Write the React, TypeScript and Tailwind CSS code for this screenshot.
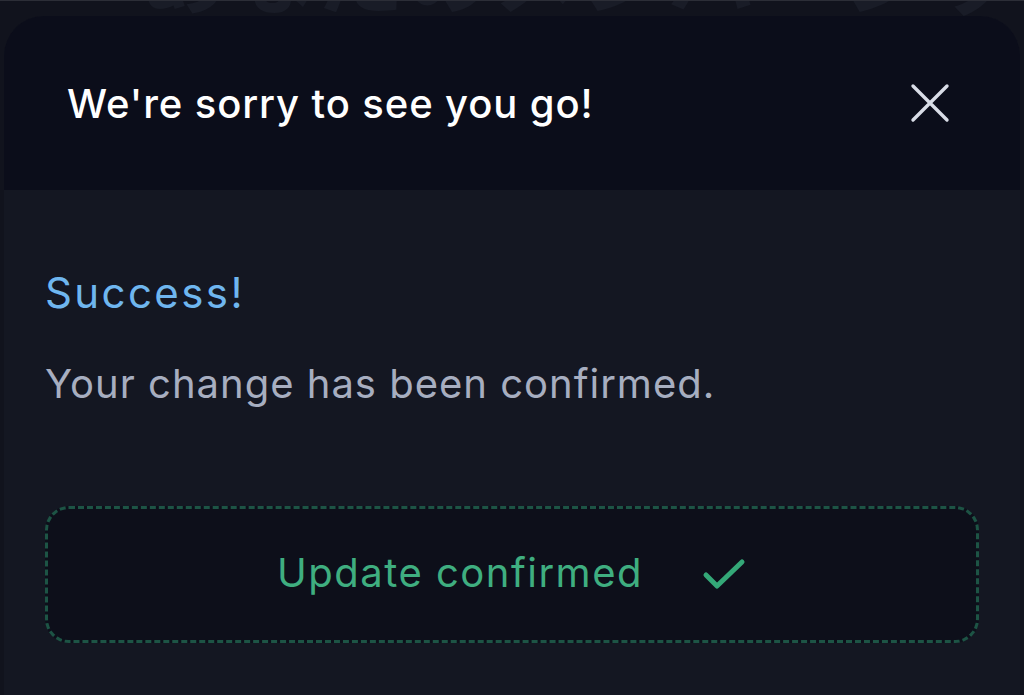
import React from 'react';

const App = () => {
  return (
    <div
      className="relative w-[1024px] h-[695px] overflow-hidden bg-[#11131d] border-t border-[#2c2e37]"
      style={{ fontFamily: 'Inter, "Noto Sans CJK JP", sans-serif' }}
    >
      {/* Page behind the sheet */}
      <div className="h-[15px] overflow-hidden">
        <div className="pl-[140px] -mt-[70px] text-[88px] font-bold leading-none text-[#191c27] whitespace-nowrap">
          あなたのメンバーシップ
        </div>
      </div>

      {/* Sheet */}
      <div className="mx-[4px] h-[690px] rounded-t-[40px] overflow-hidden bg-[#141722] flex flex-col">
        <div className="h-[174px] bg-[#0b0d1a] flex items-center justify-between pl-[63px] pr-[70px]">
          <h2 className="text-[40px] font-medium text-white tracking-[0.9px] pt-[2px]">
            We're sorry to see you go!
          </h2>
          <svg width="40" height="40" viewBox="0 0 40 40" fill="none" stroke="#d9dde7" strokeWidth="3.4" strokeLinecap="round">
            <path d="M3 3 L37 37 M37 3 L3 37" />
          </svg>
        </div>

        <div className="px-[41px] pt-[82px]">
          <p className="text-[42px] text-[#6fb6ef] leading-none tracking-[2.4px]">Success!</p>
          <p className="mt-[50px] text-[40px] text-[#a7aec0] leading-none tracking-[1px]">
            Your change has been confirmed.
          </p>

          <div className="mt-[102px] h-[137px] rounded-[24px] border-[3px] border-dashed border-[#1d5445] bg-[#0d0f1a] flex items-center justify-center gap-[58px]">
            <span className="text-[40px] text-[#3fae80] leading-none pb-[4px] tracking-[1.5px]">Update confirmed</span>
            <svg width="46" height="36" viewBox="0 0 46 36" fill="none" stroke="#34a878" strokeWidth="5" strokeLinecap="round" strokeLinejoin="round">
              <path d="M5 18 L16 29 L41 5" />
            </svg>
          </div>
        </div>
      </div>
    </div>
  );
};

export default App;
